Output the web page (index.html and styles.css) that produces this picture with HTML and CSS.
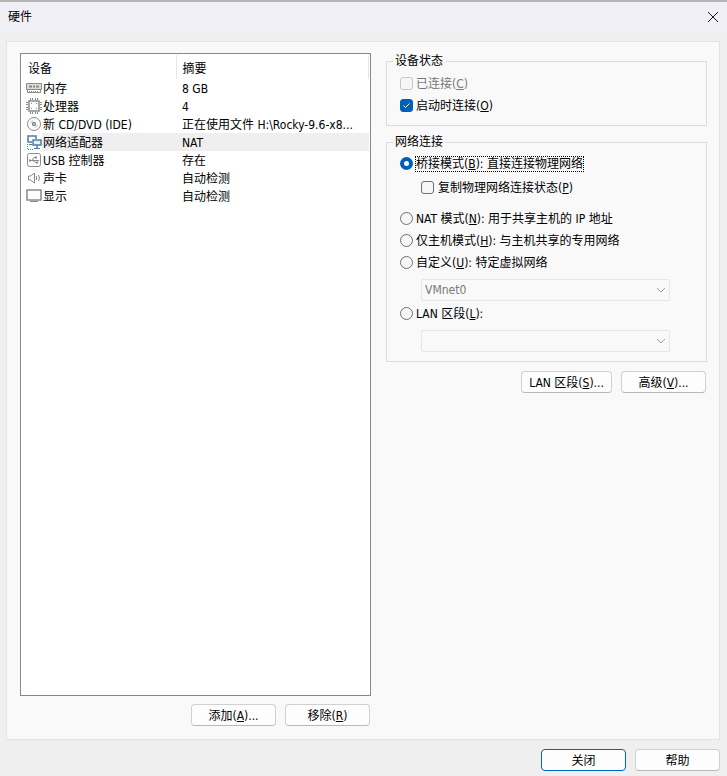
FILE: index.html
```html
<!DOCTYPE html>
<html lang="zh-CN">
<head>
    <meta charset="UTF-8">
    <title>硬件</title>
    <link rel="stylesheet" href="styles.css">
</head>
<body>
<div class="dialog">
    <header class="titlebar">
        <h1>硬件</h1>
        <button type="button" class="close" aria-label="关闭窗口">
            <svg width="12" height="12" viewBox="0 0 12 12"><path d="M1 1l10 10M11 1L1 11"/></svg>
        </button>
    </header>
    <main class="panel">
        <section class="left">
            <div class="list">
                <table>
                    <thead>
                        <tr><th class="name">设备</th><th>摘要</th></tr>
                    </thead>
                    <tbody>
                        <tr>
                            <td><div class="device">
                                <svg class="icon" viewBox="0 0 16 16"><path class="soft" d="M1 3h14v7H1z"/><path d="M.5 3.5h15v6h-1v3h-13v-3h-1zM1 9.5h14"/><path class="bold" d="M3 6.5h3M7 6.5h2M10 6.5h3"/><path d="M3 11.5h10" stroke-dasharray="1 1"/></svg>
                                <span>内存</span></div></td>
                            <td>8 GB</td>
                        </tr>
                        <tr>
                            <td><div class="device">
                                <svg class="icon" viewBox="0 0 16 16"><path class="line" d="M3 3h10v10H3z"/><path d="M4.5 0v2M6.5 0v2M9.5 0v2M11.5 0v2M4.5 14v2M6.5 14v2M9.5 14v2M11.5 14v2M0 4.5h2M0 6.5h2M0 9.5h2M0 11.5h2M14 4.5h2M14 6.5h2M14 9.5h2M14 11.5h2"/><path d="M5 5.5h1M10 5.5h1M5 10.5h1M10 10.5h1"/></svg>
                                <span>处理器</span></div></td>
                            <td>4</td>
                        </tr>
                        <tr>
                            <td><div class="device">
                                <svg class="icon" viewBox="0 0 16 16"><circle cx="8" cy="8" r="6.5"/><circle class="line" cx="8" cy="8" r="1.5"/><path class="thin" d="M4.5 7q.5-2 2.500-2.500M11.500 9q-.5 2-2.500 2.500"/></svg>
                                <span>新 CD/DVD (IDE)</span></div></td>
                            <td>正在使用文件 H:\Rocky-9.6-x8...</td>
                        </tr>
                        <tr class="selected">
                            <td><div class="device">
                                <svg class="icon blue" viewBox="0 0 16 16"><path class="line" d="M6 8H2V2h8v3"/><path d="M3 10.5h3"/><path class="screen" d="M7 6h8v5H7z"/><path class="line" d="M11 11v3"/><path d="M8 14.5h6"/><path class="dots" d="M1.5 10v5.5H8"/></svg>
                                <span>网络适配器</span></div></td>
                            <td>NAT</td>
                        </tr>
                        <tr>
                            <td><div class="device">
                                <svg class="icon" viewBox="0 0 16 16"><rect x="1.5" y="1.5" width="13" height="13" rx="2"/><path d="M4 8.5h9M6 8.5l2-3h1M7 8.5l2 2h1"/><path class="bold" d="M3 8.5h2M9 5.5h2M10 10.5h2"/></svg>
                                <span>USB 控制器</span></div></td>
                            <td>存在</td>
                        </tr>
                        <tr>
                            <td><div class="device">
                                <svg class="icon" viewBox="0 0 16 16"><path d="M2.5 6v4h2l4 3V3l-4 3zM10.5 6v4M12.5 5q2 3 0 6"/></svg>
                                <span>声卡</span></div></td>
                            <td>自动检测</td>
                        </tr>
                        <tr>
                            <td><div class="device">
                                <svg class="icon" viewBox="0 0 16 16"><path class="line" d="M1 2h14v10H1z"/><path d="M4 13.5h8"/></svg>
                                <span>显示</span></div></td>
                            <td>自动检测</td>
                        </tr>
                    </tbody>
                </table>
            </div>
            <div class="buttons">
                <button type="button">添加(<u>A</u>)...</button>
                <button type="button">移除(<u>R</u>)</button>
            </div>
        </section>
        <section class="right">
            <fieldset class="state">
                <legend>设备状态</legend>
                <label class="disabled"><input type="checkbox" disabled>已连接(<u>C</u>)</label>
                <label><input type="checkbox" checked>启动时连接(<u>O</u>)</label>
            </fieldset>
            <fieldset class="network">
                <legend>网络连接</legend>
                <label><input type="radio" name="net" checked><span class="focus">桥接模式(<u>B</u>): 直接连接物理网络</span></label>
                <label class="sub"><input type="checkbox">复制物理网络连接状态(<u>P</u>)</label>
                <label><input type="radio" name="net">NAT 模式(<u>N</u>): 用于共享主机的 IP 地址</label>
                <label><input type="radio" name="net">仅主机模式(<u>H</u>): 与主机共享的专用网络</label>
                <label><input type="radio" name="net">自定义(<u>U</u>): 特定虚拟网络</label>
                <div class="select">
                    <select aria-label="特定虚拟网络" disabled><option>VMnet0</option></select>
                    <svg width="10" height="6" viewBox="0 0 10 6"><path d="M1 1l4 4 4-4"/></svg>
                </div>
                <label><input type="radio" name="net">LAN 区段(<u>L</u>):</label>
                <div class="select">
                    <select aria-label="LAN 区段" disabled><option></option></select>
                    <svg width="10" height="6" viewBox="0 0 10 6"><path d="M1 1l4 4 4-4"/></svg>
                </div>
            </fieldset>
            <div class="buttons">
                <button type="button" class="wide">LAN 区段(<u>S</u>)...</button>
                <button type="button">高级(<u>V</u>)...</button>
            </div>
        </section>
    </main>
    <footer class="buttons">
        <button type="button" class="primary">关闭</button>
        <button type="button">帮助</button>
    </footer>
</div>
</body>
</html>
```
FILE: styles.css
```css
*{
    margin: 0;
    padding: 0;
    box-sizing: border-box;
}
body, button, select{
    font-family: Tahoma, "DejaVu Sans Condensed", "Noto Sans CJK SC", sans-serif;
    font-size: 12px;
    line-height: 18px;
    color: #000;
}
.dialog{
    display: flex;
    flex-direction: column;
    min-height: 100vh;
    background: #efefef;
    border-top: 2px solid #b4b4b4;
}
.titlebar{
    display: flex;
    align-items: center;
    justify-content: space-between;
    height: 30px;
    padding: 0 8px;
    background: #f2f0f7;
}
.titlebar h1{
    font-size: 12px;
    font-weight: normal;
}
.titlebar .close{
    display: flex;
    min-width: 0;
    height: 12px;
    padding: 0;
    border: 0;
    background: none;
}
svg{
    fill: none;
    stroke: #1a1a1a;
}
.panel{
    flex: 1;
    display: flex;
    gap: 15px;
    margin: 9px 7px 0 6px;
    padding: 11px 12px 13px 13px;
    background: #f9f9f9;
    border: 1px solid #e3e3e3;
}
.left{
    flex: 351;
    display: flex;
    flex-direction: column;
    gap: 8px;
    min-width: 0;
}
.right{
    flex: 321;
    min-width: 0;
    padding-top: 1px;
}
.list{
    flex: 1;
    padding: 1px;
    background: #fff;
    border: 1px solid #828790;
}
table{
    width: 100%;
    border-collapse: collapse;
    table-layout: fixed;
}
th{
    height: 24px;
    padding: 4px 0 0 6px;
    font-weight: normal;
    text-align: left;
    border-right: 1px solid #e5e5e5;
}
th.name{
    width: 154px;
}
td{
    height: 18px;
    padding: 2px 0 0 6px;
    line-height: 16px;
    white-space: nowrap;
}
td:first-child{
    padding: 0;
}
.device{
    display: flex;
    padding-left: 4px;
}
.device span{
    flex: 1;
    padding: 2px 0 0 1px;
}
.selected td:last-child,
.selected span{
    background: #efefef;
}
.icon{
    width: 16px;
    height: 16px;
    margin-top: 1px;
    stroke: #8a8a8a;
}
.icon .soft{
    fill: #ddd;
    stroke: none;
}
.icon .thin{
    stroke: #bbb;
}
.icon .line{
    stroke-width: 1.5;
}
.icon .bold{
    stroke-width: 2;
}
.blue{
    stroke: #4f7fa3;
}
.blue .screen{
    fill: #e3f1fb;
    stroke-width: 1.5;
}
.blue .dots{
    stroke-dasharray: 1 1;
}
.buttons{
    display: flex;
    justify-content: flex-end;
    gap: 9px;
}
.panel .buttons{
    padding-right: 1px;
}
button{
    min-width: 85px;
    height: 22px;
    padding-top: 2px;
    background: #fdfdfd;
    border: 1px solid #d0d0d0;
    border-bottom-color: #b8b8b8;
    border-radius: 4px;
}
button.wide{
    min-width: 91px;
}
button.primary{
    border-color: #0067c0;
}
footer{
    padding: 9px 7px 5px;
}
fieldset{
    min-width: 0;
    border: 1px solid #dcdcdc;
}
legend{
    margin-left: -6px;
    padding: 0 2px;
    line-height: 14px;
}
.state{
    height: 72px;
    padding: 5px 12px;
    margin-bottom: 9px;
}
.network{
    padding: 4px 12px 7px;
    margin-bottom: 9px;
}
label{
    display: flex;
    align-items: center;
    height: 22px;
    white-space: nowrap;
}
label.disabled{
    color: #787878;
}
label.sub{
    margin: 2px 0 9px 21px;
}
.sub input{
    margin-right: 4px;
}
input{
    appearance: none;
    flex: none;
    width: 13px;
    height: 13px;
    margin: 0 3px 2px 1px;
    border: 1px solid #707070;
    border-radius: 3px;
    background: #f6f6f6;
}
input:disabled{
    border-color: #c6c6c6;
}
input[type=radio]{
    border-radius: 50%;
}
input[type=checkbox]:checked{
    background: #005fb8 url("data:image/svg+xml,%3Csvg xmlns='http://www.w3.org/2000/svg' viewBox='0 0 11 11'%3E%3Cpath d='M2.5 5.5l2 2 4-4' fill='none' stroke='%23fff'/%3E%3C/svg%3E");
    border-color: #005fb8;
}
input[type=radio]:checked{
    border: 4px solid #005fb8;
    background: #fff;
}
.focus{
    line-height: 14px;
    outline: 1px dotted #000;
}
.select{
    position: relative;
    margin: 5px 24px 2px 22px;
}
select{
    display: block;
    appearance: none;
    width: 100%;
    height: 22px;
    padding: 0 3px;
    color: #787878;
    background: #f9f9f9;
    border: 1px solid #e6e6e6;
    border-radius: 2px;
    opacity: 1;
}
.select svg{
    position: absolute;
    right: 4px;
    top: 8px;
    stroke: #a0a0a0;
}
```
